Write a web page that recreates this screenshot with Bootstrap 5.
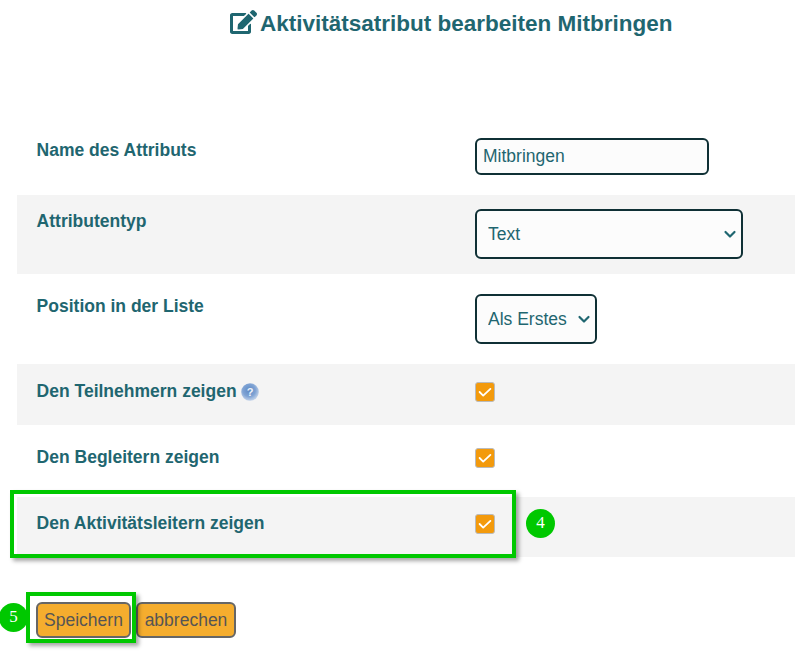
<!DOCTYPE html>
<html lang="de">
<head>
<meta charset="utf-8">
<title>Aktivitätsatribut bearbeiten</title>
<link rel="stylesheet" href="https://cdn.jsdelivr.net/npm/bootstrap@5.3.0/dist/css/bootstrap.min.css">
<style>
html,body{height:655px;overflow:hidden}
body{font-family:"Liberation Sans",Arial,sans-serif;font-size:17.5px;color:#1f6670;background:#fff;position:relative}
.pg-title{font-size:22.5px;font-weight:700;color:#1f6670;line-height:27px;margin:0;padding:10px 0 0 230px;height:130px}
.pg-title svg{width:27px;height:24px;vertical-align:-3px;fill:#1f6670;margin-right:3px}
.form-wrap{margin-left:17px}
.frow{display:flex;align-items:flex-start;position:relative}
.frow.shade{background:#f4f4f4}
.flabel{width:458px;padding-left:19.6px;font-weight:700;line-height:20px;flex:none}
.r1{height:65px}.r1 .flabel{padding-top:10px}.r1 .fctl{padding-top:8px}
.r2{height:79px}.r2 .flabel{padding-top:16px}.r2 .fctl{padding-top:14px}
.r3{height:90px}.r3 .flabel{padding-top:22px}.r3 .fctl{padding-top:20px}
.r4{height:61px}.r4 .flabel{padding-top:17px}.r4 .fctl{padding-top:18px}
.r5{height:72px}.r5 .flabel{padding-top:22px}.r5 .fctl{padding-top:23px}
.r6{height:60px}.r6 .flabel{padding-top:16px}.r6 .fctl{padding-top:17px}
.form-control.tinput,.form-select.tsel{border:2px solid #0f3035;border-radius:6px;background-color:#fcfcfc;color:#1f6670;font-size:17.5px;box-shadow:none}
.form-control.tinput{width:234px;height:37px;padding:0 6px}
.form-select.tsel{height:50px;padding:0 24px 0 11px;background-position:right 3px center;background-size:16px 12px;background-image:url("data:image/svg+xml,%3csvg xmlns='http://www.w3.org/2000/svg' viewBox='0 0 16 12'%3e%3cpath fill='none' stroke='%231f6670' stroke-linecap='round' stroke-linejoin='round' stroke-width='2.2' d='m3.5 4 4.5 4.5 4.5-4.5'/%3e%3c/svg%3e")}
.w-lg{width:268px}.w-sm{width:122px}
.form-check-input.tcheck{width:20px;height:20px;margin:0;display:block;border:1px solid #bbb;border-radius:3px;background-color:#f39a0c}
.form-check-input.tcheck:checked{background-image:url("data:image/svg+xml,%3csvg xmlns='http://www.w3.org/2000/svg' viewBox='0 0 20 20'%3e%3cpath fill='none' stroke='%23fff' stroke-linecap='round' stroke-linejoin='round' stroke-width='2' d='m4 10 4 4 8-7.5'/%3e%3c/svg%3e")}
.hint{width:18px;height:18px;vertical-align:-4px}
.hilite{position:absolute;border:4px solid #00c800;box-shadow:3px 3px 4px rgba(0,0,0,.35);pointer-events:none}
.hl-row{left:-7px;top:-7px;width:506px;height:68px}
.hl-btn{left:26px;top:592px;width:110px;height:51px}
.step{position:absolute;width:29px;height:29px;border-radius:50%;background:#00c800;color:#fff;font-family:"Liberation Serif",serif;font-size:17px;line-height:28px;text-align:center}
.st4{left:509px;top:12px}
.st5{left:-1px;top:603px}
.actions{display:flex;gap:5px;padding:45px 0 0 36px;margin-left:-17px}
.btn.tbtn{background:#f5ad2e;border:2px solid #666;border-radius:6px;color:#555;font-size:17.5px;line-height:20px;height:36px;padding:6px 0}
.btn.b-save{width:95px}.btn.b-cancel{width:100px;margin-left:0}
</style>
</head>
<body>
<h1 class="pg-title"><svg viewBox="0 0 576 512" aria-hidden="true"><path d="M402.6 83.2l90.2 90.2c3.8 3.8 3.8 10 0 13.8L274.4 405.6l-92.8 10.3c-12.4 1.4-22.9-9.1-21.5-21.5l10.3-92.8L388.8 83.2c3.8-3.8 10-3.8 13.8 0zm162-22.9l-48.8-48.8c-15.2-15.2-39.9-15.2-55.2 0l-35.4 35.4c-3.8 3.8-3.8 10 0 13.8l90.2 90.2c3.8 3.8 10 3.8 13.8 0l35.4-35.4c15.2-15.3 15.2-40 0-55.2zM384 346.2V448H64V128h229.8c3.2 0 6.2-1.3 8.5-3.5l40-40c7.6-7.6 2.2-20.5-8.5-20.5H48C21.5 64 0 85.5 0 112v352c0 26.5 21.5 48 48 48h352c26.5 0 48-21.5 48-48V306.2c0-10.7-12.9-16-20.5-8.5l-40 40c-2.2 2.3-3.5 5.3-3.5 8.5z"/></svg>Aktivitätsatribut bearbeiten Mitbringen</h1>
<form class="form-wrap">
  <div class="frow r1"><div class="flabel">Name des Attributs</div><div class="fctl"><input class="form-control tinput" type="text" value="Mitbringen"></div></div>
  <div class="frow r2 shade"><div class="flabel">Attributentyp</div><div class="fctl"><select class="form-select tsel w-lg"><option>Text</option></select></div></div>
  <div class="frow r3"><div class="flabel">Position in der Liste</div><div class="fctl"><select class="form-select tsel w-sm"><option>Als Erstes</option></select></div></div>
  <div class="frow r4 shade"><div class="flabel">Den Teilnehmern zeigen <svg class="hint" viewBox="0 0 18 18" aria-hidden="true"><defs><radialGradient id="hg" cx=".45" cy=".4" r=".65"><stop offset="0" stop-color="#5f8ac4"/><stop offset=".55" stop-color="#7fa3d4"/><stop offset="1" stop-color="#cfdcee"/></radialGradient></defs><circle cx="9" cy="9" r="8.8" fill="url(#hg)"/><text x="9" y="13" text-anchor="middle" font-size="11" font-weight="700" fill="#eef3fa" font-family="Liberation Sans">?</text></svg></div><div class="fctl"><input class="form-check-input tcheck" type="checkbox" checked></div></div>
  <div class="frow r5"><div class="flabel">Den Begleitern zeigen</div><div class="fctl"><input class="form-check-input tcheck" type="checkbox" checked></div></div>
  <div class="frow r6 shade"><div class="flabel">Den Aktivitätsleitern zeigen</div><div class="fctl"><input class="form-check-input tcheck" type="checkbox" checked></div>
    <div class="hilite hl-row"></div><div class="step st4">4</div></div>
  <div class="actions"><button type="button" class="btn tbtn b-save">Speichern</button><button type="button" class="btn tbtn b-cancel">abbrechen</button></div>
</form>
<div class="hilite hl-btn"></div><div class="step st5">5</div>
<script src="https://cdn.jsdelivr.net/npm/bootstrap@5.3.0/dist/js/bootstrap.bundle.min.js"></script>
</body>
</html>
